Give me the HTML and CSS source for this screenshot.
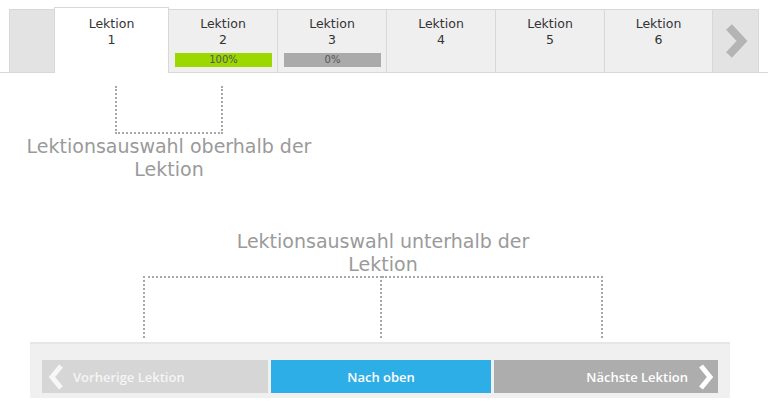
FILE: index.html
```html
<!DOCTYPE html>
<html lang="de">
<head>
    <meta charset="UTF-8">
    <title>Lektionsauswahl</title>
    <link rel="stylesheet" href="styles.css">
</head>
<body>

<div class="lesson-bar">
    <div class="tabs">
        <div class="tab-edge"></div>
        <div class="tab active">Lektion<br>1</div>
        <div class="tab">Lektion<br>2
            <div class="progress done">100%</div>
        </div>
        <div class="tab">Lektion<br>3
            <div class="progress">0%</div>
        </div>
        <div class="tab">Lektion<br>4</div>
        <div class="tab">Lektion<br>5</div>
        <div class="tab narrow">Lektion<br>6</div>
        <div class="tab-edge arrow">
            <svg width="28" height="36" viewBox="0 0 28 36">
                <polyline points="6,4 19,18 6,32" fill="none" stroke="#b4b4b4" stroke-width="8"/>
            </svg>
        </div>
    </div>
</div>

<div class="note-top">
    <div class="bracket-up"></div>
    <div class="note-text">Lektionsauswahl oberhalb der Lektion</div>
</div>

<div class="note-bottom">
    <div class="note-text">Lektionsauswahl unterhalb der Lektion</div>
    <div class="bracket-down">
        <div class="half left"></div>
        <div class="half right"></div>
    </div>
</div>

<div class="pager">
    <div class="pager-btn prev">
        <svg width="18" height="28" viewBox="0 0 18 28">
            <polyline points="13,3 4,14 13,25" fill="none" stroke="#f7f7f7" stroke-width="5"/>
        </svg>
        Vorherige Lektion
    </div>
    <div class="pager-btn top">Nach oben</div>
    <div class="pager-btn next">
        Nächste Lektion
        <svg width="18" height="28" viewBox="0 0 18 28">
            <polyline points="5,3 14,14 5,25" fill="none" stroke="#ffffff" stroke-width="5"/>
        </svg>
    </div>
</div>

</body>
</html>
```

FILE: styles.css
```css
body {
    margin: 0;
    font-family: "DejaVu Sans", Verdana, sans-serif;
    background-color: #fff;
    color: #333;
}

.lesson-bar {
    padding-top: 7px;
    border-bottom: 1px solid #d8d8d8;
}

.tabs {
    display: flex;
    margin-left: 9px;
    height: 65px;
}

.tab-edge {
    width: 45px;
    margin-top: 2px;
    background-color: #e3e3e3;
    border-top: 1px solid #d8d8d8;
    border-left: 1px solid #d8d8d8;
    box-sizing: border-box;
}

.tab-edge.arrow {
    width: 47px;
    border-right: 1px solid #d8d8d8;
    display: flex;
    align-items: center;
    justify-content: center;
    padding-left: 2px;
}

.tab {
    width: 109px;
    margin-top: 2px;
    padding-top: 6px;
    box-sizing: border-box;
    background-color: #efefef;
    border-top: 1px solid #d8d8d8;
    border-left: 1px solid #d8d8d8;
    text-align: center;
    font-size: 12.5px;
    line-height: 16px;
    color: #333;
}

.tab.narrow {
    width: 108px;
}

.tab.active {
    width: 115px;
    margin-top: 0;
    padding-top: 8px;
    background-color: #fff;
    border-right: 1px solid #d8d8d8;
    margin-bottom: -1px;
}

.tab.active + .tab {
    border-left: none;
    width: 108px;
}

.progress {
    margin: 5px 5px 0 6px;
    height: 14px;
    line-height: 14px;
    font-size: 10px;
    color: #555;
    background-color: #aaaaaa;
}

.progress.done {
    background-color: #9ad800;
}

.note-text {
    font-size: 19px;
    line-height: 23px;
    color: #9a9a9a;
    text-align: center;
}

.note-top {
    width: 338px;
    margin-top: 13px;
}

.note-top .note-text {
    width: 310px;
    margin: 0 auto;
}

.bracket-up {
    width: 104px;
    height: 46px;
    margin: 0 auto 1px auto;
    border: 2px dotted #a8a8a8;
    border-top: none;
}

.note-bottom {
    margin-top: 49px;
}

.note-bottom .note-text {
    width: 320px;
    margin-left: 223px;
}

.bracket-down {
    display: flex;
    margin-left: 143px;
    margin-top: 0;
    height: 62px;
}

.half {
    border-top: 2px dotted #a8a8a8;
    border-right: 2px dotted #a8a8a8;
}

.half.left {
    width: 235px;
    border-left: 2px dotted #a8a8a8;
}

.half.right {
    width: 219px;
}

.pager {
    display: flex;
    gap: 3px;
    width: 700px;
    margin: 4px 0 0 30px;
    box-sizing: border-box;
    padding: 16px 12px 5px 12px;
    background-color: #f0f0f0;
    border-top: 2px solid #e6e6e6;
}

.pager-btn {
    flex: 1;
    height: 33px;
    display: flex;
    align-items: center;
    font-family: "Open Sans", sans-serif;
    font-weight: 600;
    font-size: 13px;
    color: #fff;
}

.pager-btn.prev {
    background-color: #d6d6d6;
    color: #f5f5f5;
    padding-left: 6px;
    gap: 7px;
}

.pager-btn.top {
    background-color: #2eaee6;
    justify-content: center;
}

.pager-btn.next {
    background-color: #adadad;
    justify-content: flex-end;
    padding-right: 4px;
    gap: 8px;
}
```
